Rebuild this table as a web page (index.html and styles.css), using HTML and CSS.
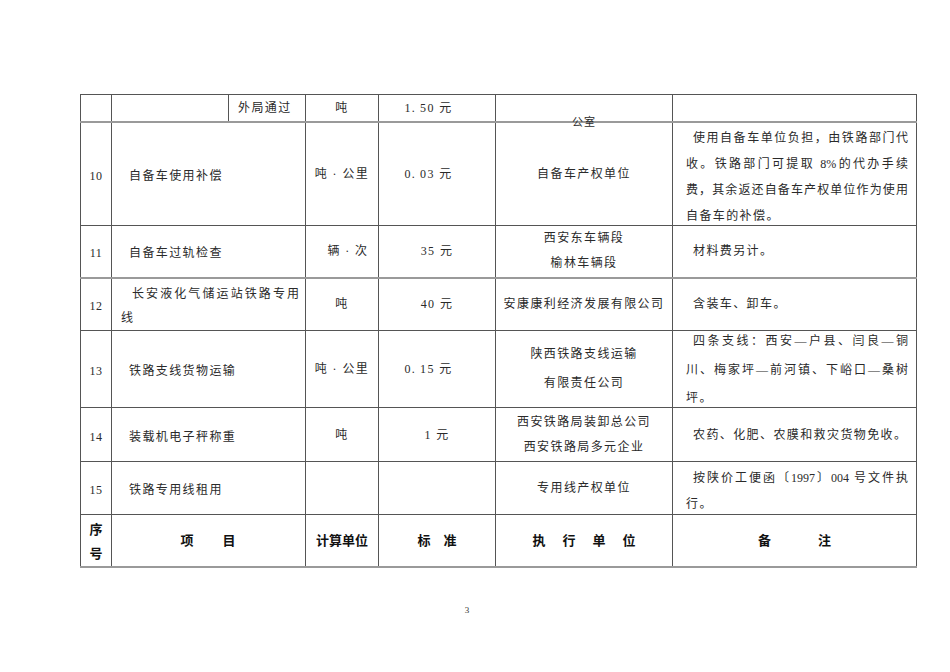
FILE: index.html
```html
<!DOCTYPE html>
<html lang="zh-CN">
<head>
<meta charset="utf-8">
<title>收费标准</title>
<link rel="stylesheet" href="styles.css">
</head>
<body>
<div class="page">
  <table class="fee">
    <colgroup>
      <col class="c-no">
      <col class="c-ia">
      <col class="c-ib">
      <col class="c-unit">
      <col class="c-std">
      <col class="c-exec">
      <col class="c-rm">
    </colgroup>
    <tbody>
      <tr class="r1 lt">
        <td></td>
        <td></td>
        <td class="sub">外局通过</td>
        <td class="ctr">吨</td>
        <td class="ctr dec">1.&thinsp;50 元</td>
        <td class="ctr carry"><span class="carry-text">公室</span></td>
        <td></td>
      </tr>
      <tr class="r10">
        <td class="ctr no">10</td>
        <td class="item" colspan="2">自备车使用补偿</td>
        <td class="ctr">吨 · 公里</td>
        <td class="ctr dec">0.&thinsp;03 元</td>
        <td class="ctr">自备车产权单位</td>
        <td class="rm lh26">
          <div class="rm-box">
            <span class="jl first">使用自备车单位负担，由铁路部门代</span>
            <span class="jl">收。铁路部门可提取 8%的代办手续</span>
            <span class="jl">费，其余返还自备车产权单位作为使用</span>
            <span class="ll">自备车的补偿。</span>
          </div>
        </td>
      </tr>
      <tr class="r11 lt">
        <td class="ctr no">11</td>
        <td class="item" colspan="2">自备车过轨检查</td>
        <td class="ctr shift">辆 · 次</td>
        <td class="ctr">35 元</td>
        <td class="ctr lh25">西安东车辆段<br>榆林车辆段</td>
        <td class="rm one">材料费另计。</td>
      </tr>
      <tr class="r12">
        <td class="ctr no">12</td>
        <td class="item two" colspan="2">
          <div class="item-box">
            <span class="jl first">长安液化气储运站铁路专用</span>
            <span class="ll">线</span>
          </div>
        </td>
        <td class="ctr">吨</td>
        <td class="ctr">40 元</td>
        <td class="ctr">安康康利经济发展有限公司</td>
        <td class="rm one">含装车、卸车。</td>
      </tr>
      <tr class="r13">
        <td class="ctr no">13</td>
        <td class="item" colspan="2">铁路支线货物运输</td>
        <td class="ctr">吨 · 公里</td>
        <td class="ctr dec">0.&thinsp;15 元</td>
        <td class="ctr lh29">陕西铁路支线运输<br>有限责任公司</td>
        <td class="rm lh28">
          <div class="rm-box tight">
            <span class="jl first">四条支线：西安—户县、闫良—铜</span>
            <span class="jl">川、梅家坪—前河镇、下峪口—桑树</span>
            <span class="ll">坪。</span>
          </div>
        </td>
      </tr>
      <tr class="r14">
        <td class="ctr no">14</td>
        <td class="item" colspan="2">装载机电子秤称重</td>
        <td class="ctr">吨</td>
        <td class="ctr">1 元</td>
        <td class="ctr lh25">西安铁路局装卸总公司<br>西安铁路局多元企业</td>
        <td class="rm one">农药、化肥、农膜和救灾货物免收。</td>
      </tr>
      <tr class="r15">
        <td class="ctr no">15</td>
        <td class="item" colspan="2">铁路专用线租用</td>
        <td></td>
        <td></td>
        <td class="ctr">专用线产权单位</td>
        <td class="rm lh26">
          <div class="rm-box">
            <span class="jl first">按陕价工便函〔1997〕004 号文件执</span>
            <span class="ll">行。</span>
          </div>
        </td>
      </tr>
      <tr class="rh lt">
        <th class="h-no">序<br>号</th>
        <th colspan="2" class="h-item">项　　目</th>
        <th>计算单位</th>
        <th>标　准</th>
        <th class="h-exec">执行单位</th>
        <th class="h-rm">备　　注</th>
      </tr>
    </tbody>
  </table>
  <div class="pn">3</div>
</div>
</body>
</html>
```

FILE: styles.css
```css
html, body {
  margin: 0;
  padding: 0;
  background: #ffffff;
}

.page {
  width: 950px;
  height: 672px;
  box-sizing: border-box;
  padding: 94px 0 0 80px;
  font-family: "Liberation Serif", "Noto Sans CJK SC", serif;
  font-size: 12px;
  font-weight: 400;
  color: #2a2a2a;
}

.fee {
  border-collapse: collapse;
  table-layout: fixed;
  width: 836px;
}

.c-no { width: 31px; }
.c-ia { width: 117px; }
.c-ib { width: 77px; }
.c-unit { width: 73px; }
.c-std { width: 117px; }
.c-exec { width: 177px; }
.c-rm { width: 244px; }

.fee td,
.fee th {
  border: 1px solid #555555;
  padding: 0;
  vertical-align: middle;
  letter-spacing: 1.4px;
  line-height: 16px;
  overflow: visible;
}

.fee tr.lt > td,
.fee tr.lt > th {
  border-bottom: 2px solid #9a9a9a;
}

.r1 { height: 27px; }
.r10 { height: 104px; }
.r11 { height: 52px; }
.r12 { height: 53px; }
.r13 { height: 77px; }
.r14 { height: 54px; }
.r15 { height: 53px; }
.rh { height: 52px; }

.fee td.ctr { text-align: center; }

.fee td.no { letter-spacing: 0.5px; padding-top: 4px; }

.fee td.sub { padding-left: 9px; }

.fee td.dec { padding-right: 17px; }

.fee td.shift { padding-left: 12px; }

.fee td.carry { position: relative; }

.carry-text {
  position: absolute;
  left: 0;
  right: 0;
  bottom: -8px;
  text-align: center;
  font-size: 11px;
  letter-spacing: 1px;
  line-height: 14px;
}

.fee td.item {
  padding: 4px 6px 0 9px;
  text-indent: 8px;
}

.fee td.item.two {
  text-indent: 0;
  padding-top: 3px;
}

.item-box { line-height: 24px; }

.fee td.lh25 { line-height: 25px; }
.fee td.lh29 { line-height: 29px; }

.fee td.rm {
  padding: 0 8px 0 13px;
}

.fee td.rm.one {
  text-indent: 7px;
}

.fee td.lh26 { line-height: 26px; }
.fee td.lh28 { line-height: 28.5px; }

.rm-box {
  margin: 0 0 -6px 0;
}

.rm-box.tight {
  margin: -4px 0 -6px 0;
}

.jl {
  display: block;
  letter-spacing: 0;
  text-align: justify;
  text-align-last: justify;
}

.jl.first { text-indent: 7px; }

.item-box .jl.first { text-indent: 11px; }

.ll {
  display: block;
  text-indent: 0;
  text-align: left;
}

.fee th {
  font-family: "Noto Sans CJK SC", sans-serif;
  font-weight: 700;
  font-size: 13px;
  color: #111111;
  letter-spacing: 0;
  text-align: center;
}

.fee th.h-no { line-height: 24px; padding-top: 2px; }
.fee th.h-item { letter-spacing: 1px; }
.fee th.h-exec { letter-spacing: 17px; padding-left: 17px; }
.fee th.h-rm { letter-spacing: 7px; padding-left: 7px; }

.pn {
  width: 836px;
  box-sizing: border-box;
  padding-right: 62px;
  margin-top: 37px;
  text-align: center;
  font-size: 9px;
  line-height: 10px;
  color: #333333;
}
```
